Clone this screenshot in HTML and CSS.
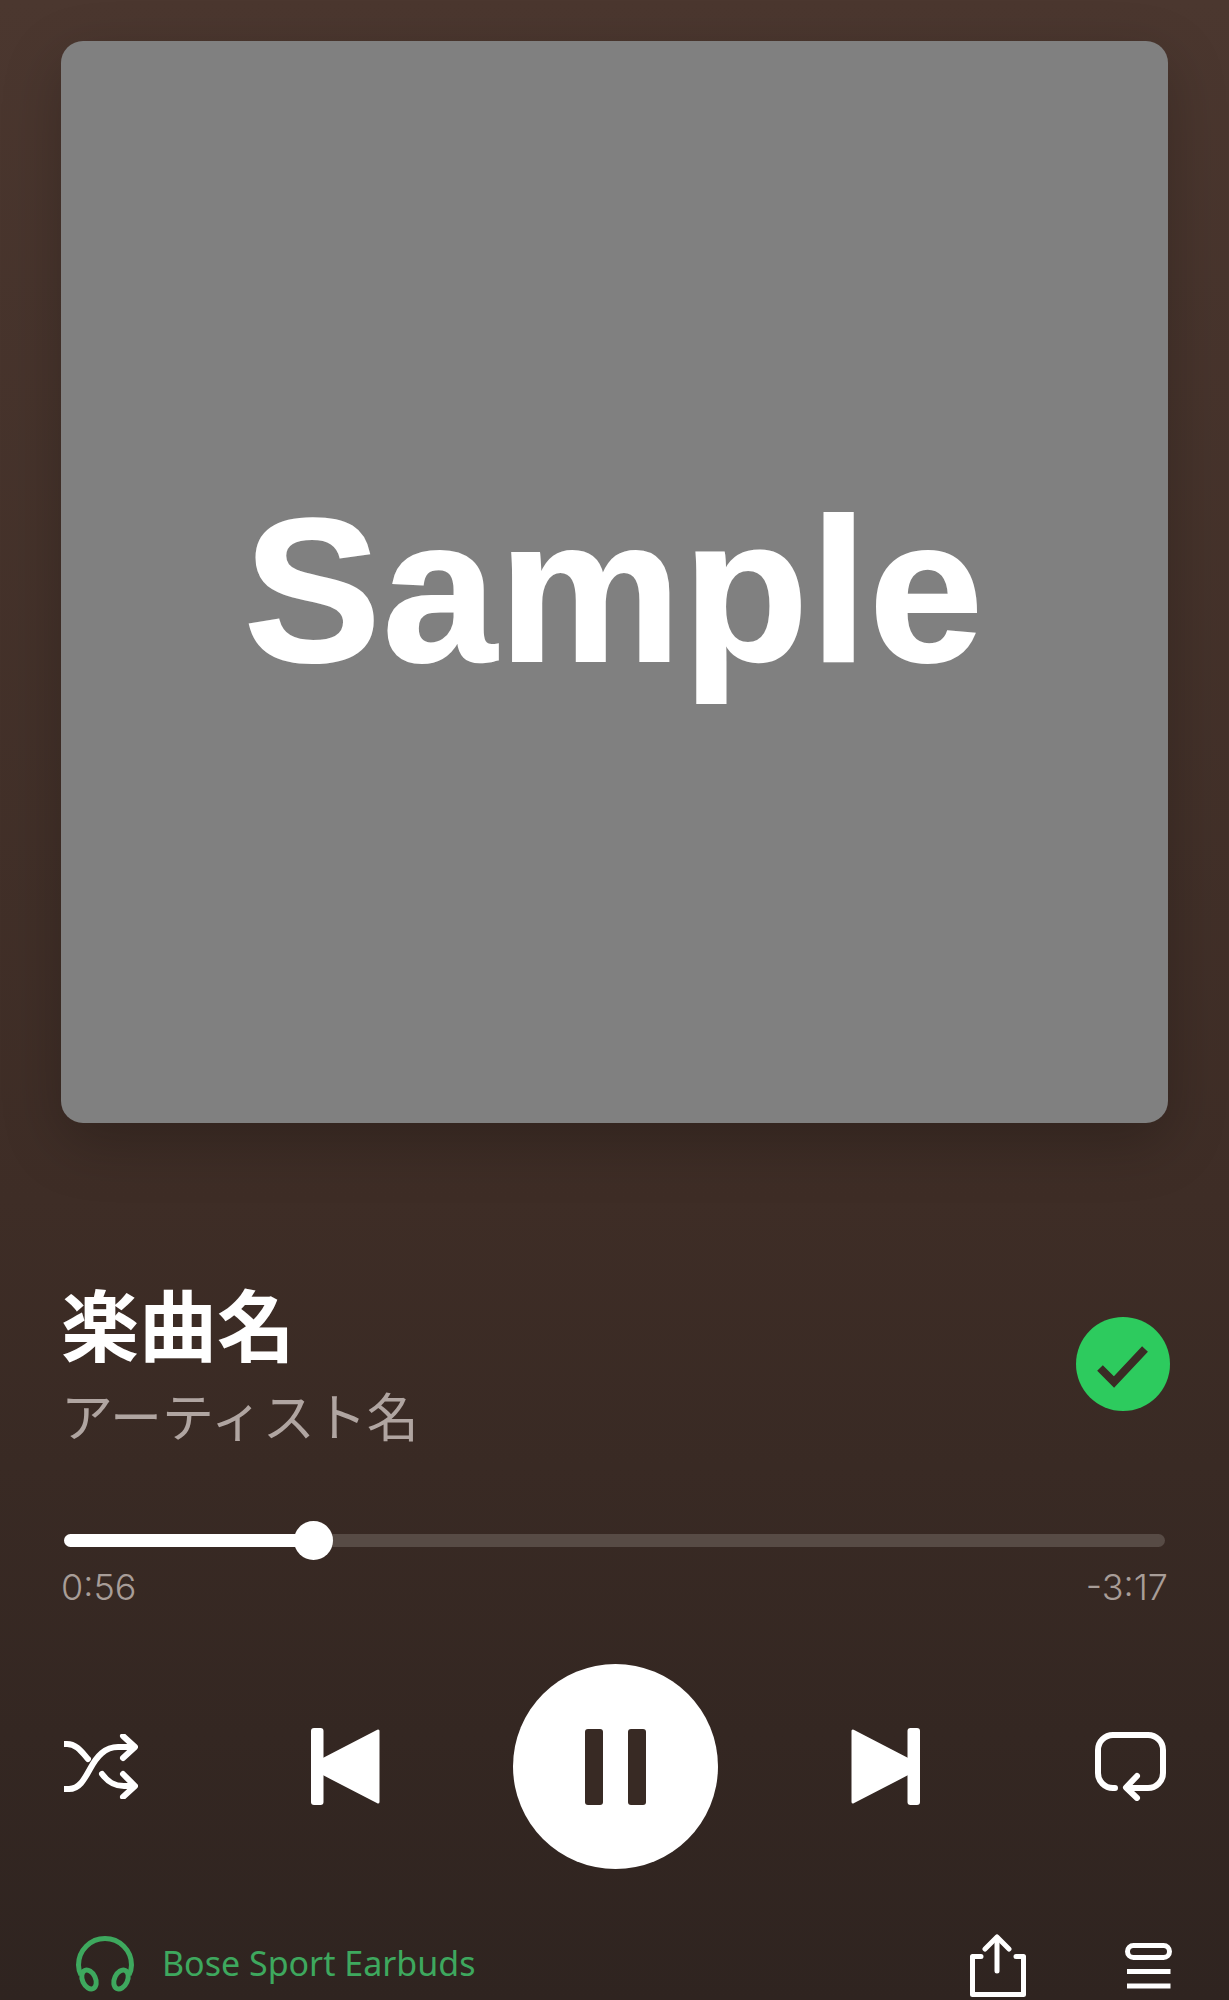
FILE: index.html
```html
<!DOCTYPE html>
<html lang="ja">

<head>
    <meta charset="UTF-8">
    <meta name="viewport" content="width=device-width, initial-scale=1.0">
    <title>楽曲名</title>
    <link rel="stylesheet" href="styles.css">
</head>

<body>
    <div class="player">
        <div class="art">Sample</div>

        <div class="meta">
            <div>
                <h1 class="song">楽曲名</h1>
                <p class="artist">アーティスト名</p>
            </div>
            <svg class="saved" viewBox="0 0 94 94" width="94" height="94">
                <circle cx="47" cy="47" r="47" fill="#2dcb5e" />
                <path d="M24 51 L38 65 L69 32" fill="none" stroke="#3a2b25" stroke-width="8" />
            </svg>
        </div>

        <div class="slider">
            <div class="track">
                <div class="fill"></div>
            </div>
            <div class="thumb"></div>
        </div>
        <div class="times">
            <span>0:56</span>
            <span>-3:17</span>
        </div>

        <div class="controls">
            <!-- shuffle -->
            <svg class="line-icon" viewBox="0 0 74 65" width="74" height="65">
                <path d="M0 10 H3 C12 10 17 17 24 25" />
                <path d="M0 55 H5 C15 55 20 46 26 35 C33 22 41 13 54 13 H70" />
                <path d="M38 40 C44 48 50 52 60 52 H70" />
                <path d="M59 2 L71 13 L59 24" />
                <path d="M59 40 L71 52 L59 63" />
            </svg>
            <div class="transport">
                <svg viewBox="0 0 69 77" width="69" height="77">
                    <rect width="12.5" height="77" rx="3" fill="#fff" />
                    <path d="M12 31.5 L67 3 V74 L12 45.5 Z" fill="#fff" stroke="#fff" stroke-width="3" stroke-linejoin="round" />
                </svg>
                <button class="pause">
                    <span></span>
                    <span></span>
                </button>
                <svg viewBox="0 0 69 77" width="69" height="77">
                    <rect x="56.5" width="12.5" height="77" rx="3" fill="#fff" />
                    <path d="M57 31.5 L2 3 V74 L57 45.5 Z" fill="#fff" stroke="#fff" stroke-width="3" stroke-linejoin="round" />
                </svg>
            </div>
            <!-- repeat -->
            <svg class="line-icon" viewBox="0 0 71 69" width="71" height="69">
                <path d="M20 56 H18 A15 15 0 0 1 3 41 V18 A15 15 0 0 1 18 3 H53 A15 15 0 0 1 68 18 V41 A15 15 0 0 1 53 56 H33" />
                <path d="M42 44 L31 55.5 L42 66" />
            </svg>
        </div>

        <div class="bottom">
            <div class="device">
                <svg class="headphones" viewBox="0 -1 59 59" width="59" height="59">
                    <path d="M6 38 C4.5 35 3.5 31 3.5 28 A26.5 26.5 0 0 1 56.5 28 C56.5 31 55.5 35 54 38" />
                    <ellipse cx="14" cy="42.5" rx="6.5" ry="10" transform="rotate(-25 14 42.5)" />
                    <ellipse cx="46" cy="42.5" rx="6.5" ry="10" transform="rotate(25 46 42.5)" />
                </svg>
                <span class="device-name">Bose Sport Earbuds</span>
            </div>
            <div class="actions">
                <!-- share -->
                <svg class="line-icon thin" viewBox="0 0 56 63" width="56" height="63">
                    <path d="M11 22.5 H2.5 V60.5 H53.5 V22.5 H46" />
                    <path d="M27 37 V4" />
                    <path d="M15 15 L27 3 L39 15" />
                </svg>
                <!-- queue -->
                <svg class="line-icon thin flat" viewBox="0 0 47 46" width="47" height="46">
                    <rect x="2.5" y="2.5" width="42" height="12" rx="6" />
                    <path d="M2 28.5 H45.5" />
                    <path d="M2 43 H45.5" />
                </svg>
            </div>
        </div>
    </div>
</body>

</html>
```

FILE: styles.css
```css
body {
    margin: 0;
    height: 2000px;
    overflow: hidden;
    background: linear-gradient(#4b372f, #3e2d26 60%, #2f2420);
    color: #fff;
    font-family: "Liberation Sans", "Noto Sans CJK JP", sans-serif;
}

.player {
    padding: 41px 61px 0;
}

.art {
    height: 1082px;
    padding-top: 14px;
    box-sizing: border-box;
    display: flex;
    align-items: center;
    justify-content: center;
    border-radius: 22px;
    background-color: #808080;
    box-shadow: 0 20px 60px rgba(0, 0, 0, 0.22);
    font-size: 205px;
    font-weight: bold;
    line-height: 1;
    letter-spacing: 2px;
    -webkit-text-stroke: 2px #fff;
}

.meta {
    margin-top: 152px;
    display: flex;
    align-items: center;
    justify-content: space-between;
}

.song {
    margin: 0;
    font-family: "Noto Sans CJK JP", sans-serif;
    font-size: 78px;
    font-weight: bold;
    line-height: 94px;
}

.artist {
    margin: 16px 0 0;
    font-family: "Noto Sans CJK JP", sans-serif;
    font-size: 52px;
    font-weight: 400;
    line-height: 60px;
    color: #b0a5a1;
}

.saved {
    margin: 8px -2px 0 0;
}

.slider {
    position: relative;
    margin: 76px 3px 0;
    height: 39px;
    display: flex;
    align-items: center;
}

.track {
    width: 100%;
    height: 13px;
    border-radius: 7px;
    background-color: #574b45;
    overflow: hidden;
}

.fill {
    width: 249px;
    height: 100%;
    background-color: #fff;
}

.thumb {
    position: absolute;
    left: 230px;
    top: 0;
    width: 39px;
    height: 39px;
    border-radius: 50%;
    background-color: #fff;
}

.times {
    margin-top: 7px;
    display: flex;
    justify-content: space-between;
    font-family: "Inter", sans-serif;
    font-size: 36px;
    font-weight: 300;
    line-height: 40px;
    color: #a89d98;
}

.controls {
    margin: 57px 2px 0 3px;
    display: flex;
    align-items: center;
    justify-content: space-between;
}

.transport {
    margin-left: -2px;
    display: flex;
    align-items: center;
    gap: 133px;
}

.pause {
    width: 205px;
    height: 205px;
    padding: 0;
    border: 0;
    border-radius: 50%;
    background-color: #fff;
    display: flex;
    align-items: center;
    justify-content: center;
    gap: 25px;
}

.pause span {
    width: 18px;
    height: 76px;
    border-radius: 3px;
    background-color: #382a24;
}

.line-icon {
    fill: none;
    stroke: #fff;
    stroke-width: 6;
    stroke-linecap: round;
    stroke-linejoin: round;
}

.line-icon.thin {
    stroke-width: 5;
}

.line-icon.flat {
    stroke-linecap: butt;
}

.bottom {
    margin: 65px -4px 0 14px;
    display: flex;
    align-items: center;
    justify-content: space-between;
}

.device {
    display: flex;
    align-items: center;
    gap: 28px;
    font-family: "Noto Sans", sans-serif;
    font-size: 34px;
    color: #3ea85e;
}

.device-name {
    margin-bottom: 5px;
}

.headphones {
    fill: none;
    stroke: #3ea85e;
    stroke-width: 5;
}

.actions {
    display: flex;
    align-items: center;
    gap: 99px;
}
```
